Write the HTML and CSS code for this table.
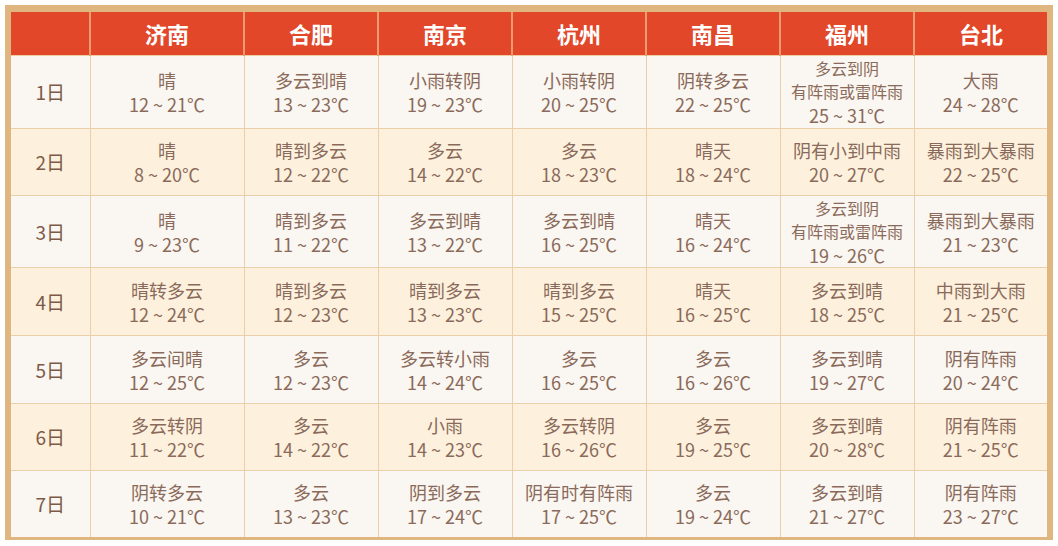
FILE: index.html
```html
<!DOCTYPE html>
<html lang="zh-CN">
<head>
<meta charset="utf-8">
<link rel="stylesheet" href="styles.css">
</head>
<body>
<div class="frame">
<table class="wx">
<colgroup>
<col class="c-day"><col class="c-wide"><col class="c"><col class="c"><col class="c"><col class="c"><col class="c"><col class="c-last">
</colgroup>
<thead>
<tr class="head"><th></th><th>济南</th><th>合肥</th><th>南京</th><th>杭州</th><th>南昌</th><th>福州</th><th>台北</th></tr>
</thead>
<tbody>
<tr class="r odd h3">
<td class="day">1日</td>
<td><div>晴</div><div>12 ~ 21℃</div></td>
<td><div>多云到晴</div><div>13 ~ 23℃</div></td>
<td><div>小雨转阴</div><div>19 ~ 23℃</div></td>
<td><div>小雨转阴</div><div>20 ~ 25℃</div></td>
<td><div>阴转多云</div><div>22 ~ 25℃</div></td>
<td><div class="sm">多云到阴</div><div class="sm">有阵雨或雷阵雨</div><div>25 ~ 31℃</div></td>
<td><div>大雨</div><div>24 ~ 28℃</div></td>
</tr>
<tr class="r even h2a">
<td class="day">2日</td>
<td><div>晴</div><div>8 ~ 20℃</div></td>
<td><div>晴到多云</div><div>12 ~ 22℃</div></td>
<td><div>多云</div><div>14 ~ 22℃</div></td>
<td><div>多云</div><div>18 ~ 23℃</div></td>
<td><div>晴天</div><div>18 ~ 24℃</div></td>
<td><div>阴有小到中雨</div><div>20 ~ 27℃</div></td>
<td><div>暴雨到大暴雨</div><div>22 ~ 25℃</div></td>
</tr>
<tr class="r odd h3b">
<td class="day">3日</td>
<td><div>晴</div><div>9 ~ 23℃</div></td>
<td><div>晴到多云</div><div>11 ~ 22℃</div></td>
<td><div>多云到晴</div><div>13 ~ 22℃</div></td>
<td><div>多云到晴</div><div>16 ~ 25℃</div></td>
<td><div>晴天</div><div>16 ~ 24℃</div></td>
<td><div class="sm">多云到阴</div><div class="sm">有阵雨或雷阵雨</div><div>19 ~ 26℃</div></td>
<td><div>暴雨到大暴雨</div><div>21 ~ 23℃</div></td>
</tr>
<tr class="r even h2b">
<td class="day">4日</td>
<td><div>晴转多云</div><div>12 ~ 24℃</div></td>
<td><div>晴到多云</div><div>12 ~ 23℃</div></td>
<td><div>晴到多云</div><div>13 ~ 23℃</div></td>
<td><div>晴到多云</div><div>15 ~ 25℃</div></td>
<td><div>晴天</div><div>16 ~ 25℃</div></td>
<td><div>多云到晴</div><div>18 ~ 25℃</div></td>
<td><div>中雨到大雨</div><div>21 ~ 25℃</div></td>
</tr>
<tr class="r odd h2b">
<td class="day">5日</td>
<td><div>多云间晴</div><div>12 ~ 25℃</div></td>
<td><div>多云</div><div>12 ~ 23℃</div></td>
<td><div>多云转小雨</div><div>14 ~ 24℃</div></td>
<td><div>多云</div><div>16 ~ 25℃</div></td>
<td><div>多云</div><div>16 ~ 26℃</div></td>
<td><div>多云到晴</div><div>19 ~ 27℃</div></td>
<td><div>阴有阵雨</div><div>20 ~ 24℃</div></td>
</tr>
<tr class="r even h2a">
<td class="day">6日</td>
<td><div>多云转阴</div><div>11 ~ 22℃</div></td>
<td><div>多云</div><div>14 ~ 22℃</div></td>
<td><div>小雨</div><div>14 ~ 23℃</div></td>
<td><div>多云转阴</div><div>16 ~ 26℃</div></td>
<td><div>多云</div><div>19 ~ 25℃</div></td>
<td><div>多云到晴</div><div>20 ~ 28℃</div></td>
<td><div>阴有阵雨</div><div>21 ~ 25℃</div></td>
</tr>
<tr class="r odd h2a">
<td class="day">7日</td>
<td><div>阴转多云</div><div>10 ~ 21℃</div></td>
<td><div>多云</div><div>13 ~ 23℃</div></td>
<td><div>阴到多云</div><div>17 ~ 24℃</div></td>
<td><div>阴有时有阵雨</div><div>17 ~ 25℃</div></td>
<td><div>多云</div><div>19 ~ 24℃</div></td>
<td><div>多云到晴</div><div>21 ~ 27℃</div></td>
<td><div>阴有阵雨</div><div>23 ~ 27℃</div></td>
</tr>
</tbody>
</table>
</div>
</body>
</html>
```
FILE: styles.css
```css
html, body {
  margin: 0;
  padding: 0;
  background: #ffffff;
}
body {
  padding: 5px 0 0 5px;
  font-family: "Noto Sans CJK SC", "Noto Sans", sans-serif;
}
.frame {
  width: 1036px;
  border: 6px solid #dfb67f;
  border-top-width: 7px;
  border-bottom-width: 3px;
  background: #faf6f1;
}
.wx {
  width: 1036px;
  table-layout: fixed;
  border-collapse: collapse;
  border-spacing: 0;
}
.c-day { width: 79px; }
.c-wide { width: 154px; }
.c { width: 134px; }
.c-last { width: 133px; }
.head th {
  height: 43px;
  padding: 0;
  background: #e2472a;
  color: #ffffff;
  font-size: 22px;
  font-weight: 700;
  line-height: 43px;
  text-align: center;
  border-left: 2px solid #f09a72;
  border-bottom: 1px solid #eccfa5;
}
.head th:first-child { border-left: none; }
.r td {
  padding: 0;
  text-align: center;
  vertical-align: middle;
  color: #8a6a5a;
  font-size: 18px;
  line-height: 24px;
  border-left: 1px solid #ead0aa;
  border-top: 1px solid #ead0aa;
}
.r td:first-child { border-left: none; }
.r td.day {
  font-size: 19px;
  color: #7d5a48;
}
.r .sm {
  font-size: 16px;
  line-height: 23px;
}
.odd td { background: #faf6f1; }
.even td { background: #fdf1de; }
.h3 td { height: 72px; }
.h3b td { height: 71px; }
.h2a td { height: 66px; }
.h2b td { height: 67px; }
```
